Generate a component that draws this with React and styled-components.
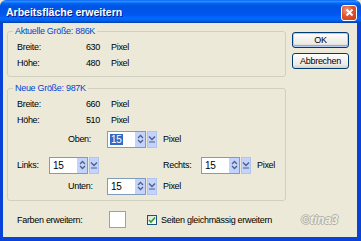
import styled, { createGlobalStyle } from "styled-components";

const Global = createGlobalStyle`
  html, body {
    margin: 0;
    padding: 0;
    background: #ece9d8;
  }
  * {
    box-sizing: border-box;
  }
`;

const Window = styled.div`
  width: 361px;
  height: 241px;
  display: flex;
  flex-direction: column;
  font-family: "Liberation Sans", sans-serif;
  font-size: 9px;
  letter-spacing: -0.3px;
  white-space: nowrap;
  color: #000;
  overflow: hidden;
  border-radius: 6px 6px 0 0;
`;

const TitleBar = styled.div`
  height: 23px;
  flex: none;
  display: flex;
  align-items: center;
  justify-content: space-between;
  padding: 0 4px 0 6px;
  background: linear-gradient(
    to bottom,
    #0058ee 0%,
    #3593ff 5%,
    #127dff 10%,
    #0262ee 16%,
    #0054e3 26%,
    #0055eb 56%,
    #005bf5 68%,
    #026afe 78%,
    #0062ef 88%,
    #0052d6 94%,
    #0040ab 100%
  );
`;

const Title = styled.span`
  color: #fff;
  font-weight: bold;
  font-size: 10.5px;
  letter-spacing: 0;
  text-shadow: 1px 1px #0a1883;
`;

const CloseButton = styled.div`
  width: 16px;
  height: 16px;
  margin-top: 2px;
  border: 1px solid #fff;
  border-radius: 3px;
  background: radial-gradient(circle at 35% 30%, #f29a7f 0%, #e0542e 45%, #c43b14 100%);
  display: flex;
  align-items: center;
  justify-content: center;
`;

const Body = styled.div`
  flex: 1;
  display: flex;
  flex-direction: column;
  background: #ece9d8;
  border-style: solid;
  border-color: #0842d8;
  border-width: 0 4px 4px 3px;
  padding: 0 0 0 4px;
`;

const Top = styled.div`
  display: flex;
  align-items: flex-start;
`;

const MainCol = styled.div`
  width: 279px;
  padding-top: 8px;
  display: flex;
  flex-direction: column;
`;

const SideCol = styled.div`
  margin-left: 6px;
  padding-top: 9px;
  display: flex;
  flex-direction: column;
  gap: 5px;
`;

const Button = styled.div`
  width: 57px;
  height: 16px;
  border: 1px solid #003c74;
  border-radius: 3px;
  background: linear-gradient(to bottom, #ffffff 0%, #f4f3ee 40%, #ecebe6 75%, #d6d0c5 100%);
  display: flex;
  align-items: center;
  justify-content: center;
  box-shadow: ${(p) => (p.$default ? "inset 0 0 0 1px #b6ccf4, inset 0 -1px 0 1px #89ade4" : "none")};
`;

const Group = styled.div`
  position: relative;
  border: 1px solid #d0d0bf;
  border-radius: 3px;
  padding: ${(p) => p.$pad};
  margin-top: ${(p) => p.$top || 0}px;
`;

const Legend = styled.span`
  position: absolute;
  top: -7px;
  left: 5px;
  padding: 0 2px;
  background: #ece9d8;
  color: #0046d5;
  line-height: 12px;
`;

const Row = styled.div`
  display: flex;
  align-items: center;
  height: ${(p) => p.$h || 16}px;
  margin-top: ${(p) => p.$top || 0}px;
  padding-left: ${(p) => p.$indent || 0}px;
`;

const Label = styled.span`
  width: ${(p) => p.$w}px;
  margin-left: ${(p) => p.$ml || 0}px;
  flex: none;
`;

const Value = styled.span`
  width: 40px;
  text-align: right;
`;

const Unit = styled.span`
  margin-left: ${(p) => p.$ml || 11}px;
`;

const Spin = styled.div`
  display: flex;
  align-items: stretch;
  height: 17px;
  width: 50px;
  flex: none;
`;

const Field = styled.div`
  width: 39px;
  display: flex;
  align-items: center;
  background: #fff;
  border: 1px solid #7f9db9;
  padding-left: 2px;
  font-size: 10px;
`;

const Num = styled.span`
  flex: 1;
  span {
    background: ${(p) => (p.$selected ? "#316ac5" : "transparent")};
    color: ${(p) => (p.$selected ? "#fff" : "#000")};
    padding: 0 1px;
  }
`;

const Arrows = styled.div`
  width: 10px;
  align-self: stretch;
  background: #c3d3fd;
  display: flex;
  align-items: center;
  justify-content: center;
`;

const DropButton = styled.div`
  width: 10px;
  margin-left: 1px;
  background: #c3d3fd;
  border: 1px solid #b1c4f0;
  display: flex;
  align-items: center;
  justify-content: center;
`;

const BottomRow = styled.div`
  display: flex;
  align-items: center;
  height: 17px;
  margin-top: 10px;
  padding-left: 10px;
`;

const BottomLabel = styled.span`
  width: 92px;
  flex: none;
`;

const Swatch = styled.div`
  width: 17px;
  height: 17px;
  background: #fff;
  border: 1px solid #a0a0a0;
`;

const Check = styled.div`
  width: 10px;
  height: 10px;
  margin-left: 21px;
  border: 1px solid #1c5180;
  background: linear-gradient(135deg, #dcdcd7, #fff);
  display: flex;
  align-items: center;
  justify-content: center;
`;

const CheckText = styled.span`
  margin-left: 4px;
`;

const Watermark = styled.span`
  margin-left: auto;
  margin-right: 19px;
  font-style: italic;
  font-weight: bold;
  font-size: 12px;
  letter-spacing: 0;
  color: #f2f1ea;
  text-shadow: 1px 0 0 #a9a79d, -1px 0 0 #a9a79d, 0 1px 0 #a9a79d, 0 -1px 0 #a9a79d;
  opacity: 0.85;
`;

const ArrowsIcon = () => (
  <svg width="7" height="10" viewBox="0 0 7 10">
    <path d="M1 4 L3.5 1.5 L6 4 M1 6 L3.5 8.5 L6 6" fill="none" stroke="#4d6185" strokeWidth="1.3" />
  </svg>
);

const DropIcon = () => (
  <svg width="8" height="10" viewBox="0 0 8 10">
    <path d="M1 2.5 L4 5.5 L7 2.5" fill="none" stroke="#4d6185" strokeWidth="1.4" />
    <path d="M1 8 L7 8" stroke="#4d6185" strokeWidth="1.2" />
  </svg>
);

function SpinField({ value, selected }) {
  return (
    <Spin>
      <Field>
        <Num $selected={selected}>
          <span>{value}</span>
        </Num>
        <Arrows>
          <ArrowsIcon />
        </Arrows>
      </Field>
      <DropButton>
        <DropIcon />
      </DropButton>
    </Spin>
  );
}

function SizeRow({ label, value }) {
  return (
    <Row>
      <Label $w={43}>{label}</Label>
      <Value>{value}</Value>
      <Unit>Pixel</Unit>
    </Row>
  );
}

export default function App() {
  return (
    <>
      <Global />
      <Window>
        <TitleBar>
          <Title>Arbeitsfläche erweitern</Title>
          <CloseButton>
            <svg width="9" height="9" viewBox="0 0 9 9">
              <path d="M1.5 1.5 L7.5 7.5 M7.5 1.5 L1.5 7.5" stroke="#fff" strokeWidth="1.8" />
            </svg>
          </CloseButton>
        </TitleBar>
        <Body>
          <Top>
            <MainCol>
              <Group $pad="7px 0 5px 9px">
                <Legend>Aktuelle Größe: 886K</Legend>
                <SizeRow label="Breite:" value="630" />
                <SizeRow label="Höhe:" value="480" />
              </Group>
              <Group $top={11} $pad="7px 0 5px 9px">
                <Legend>Neue Größe: 987K</Legend>
                <SizeRow label="Breite:" value="660" />
                <SizeRow label="Höhe:" value="510" />
                <Row $h={18} $top={2} $indent={51}>
                  <Label $w={39}>Oben:</Label>
                  <SpinField value="15" selected />
                  <Unit $ml={6}>Pixel</Unit>
                </Row>
                <Row $h={18} $top={8}>
                  <Label $w={32}>Links:</Label>
                  <SpinField value="15" />
                  <Label $w={38} $ml={64}>Rechts:</Label>
                  <SpinField value="15" />
                  <Unit $ml={6}>Pixel</Unit>
                </Row>
                <Row $h={18} $top={3} $indent={51}>
                  <Label $w={39}>Unten:</Label>
                  <SpinField value="15" />
                  <Unit $ml={6}>Pixel</Unit>
                </Row>
              </Group>
            </MainCol>
            <SideCol>
              <Button $default>OK</Button>
              <Button>Abbrechen</Button>
            </SideCol>
          </Top>
          <BottomRow>
            <BottomLabel>Farben erweitern:</BottomLabel>
            <Swatch />
            <Check>
              <svg width="8" height="8" viewBox="0 0 8 8">
                <path d="M1 4 L3 6 L7 1.5" fill="none" stroke="#21a121" strokeWidth="1.6" />
              </svg>
            </Check>
            <CheckText>Seiten gleichmässig erweitern</CheckText>
            <Watermark>©tina3</Watermark>
          </BottomRow>
        </Body>
      </Window>
    </>
  );
}
